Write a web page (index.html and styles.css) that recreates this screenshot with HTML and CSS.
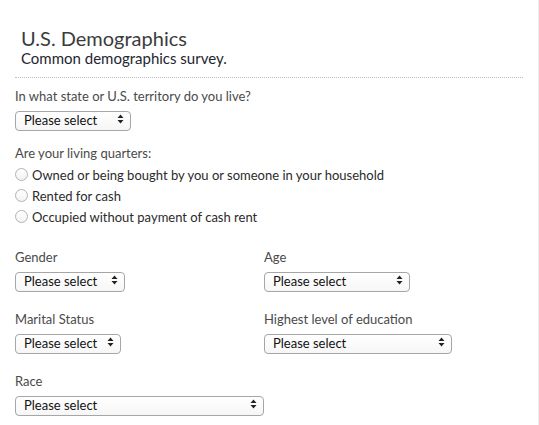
FILE: index.html
```html
<!DOCTYPE html>
<html lang="en">
<head>
<meta charset="utf-8">
<title>U.S. Demographics</title>
<link rel="stylesheet" href="styles.css">
</head>
<body>
<div class="page">
  <header class="head">
    <h1 class="title">U.S. Demographics</h1>
    <p class="subtitle">Common demographics survey.</p>
  </header>
  <hr class="rule">

  <div class="field field-state">
    <label class="label" for="state">In what state or U.S. territory do you live?</label>
    <span class="select-wrap w-state">
      <select id="state" class="select"><option>Please select</option></select>
      <svg class="arrows" width="7" height="10" viewBox="0 0 7 10"><path d="M3.5 0.5 L6.5 4 L0.5 4 Z M3.5 9.5 L6.5 6 L0.5 6 Z" fill="#222"/></svg>
    </span>
  </div>

  <div class="field field-quarters">
    <div class="label label-group">Are your living quarters:</div>
    <ul class="radios">
      <li class="radio-row"><span class="radio"></span><span class="radio-text">Owned or being bought by you or someone in your household</span></li>
      <li class="radio-row"><span class="radio"></span><span class="radio-text">Rented for cash</span></li>
      <li class="radio-row"><span class="radio"></span><span class="radio-text">Occupied without payment of cash rent</span></li>
    </ul>
  </div>

  <div class="grid">
    <div class="field">
      <label class="label" for="gender">Gender</label>
      <span class="select-wrap w-gender">
        <select id="gender" class="select"><option>Please select</option></select>
        <svg class="arrows" width="7" height="10" viewBox="0 0 7 10"><path d="M3.5 0.5 L6.5 4 L0.5 4 Z M3.5 9.5 L6.5 6 L0.5 6 Z" fill="#222"/></svg>
      </span>
    </div>
    <div class="field">
      <label class="label" for="age">Age</label>
      <span class="select-wrap w-age">
        <select id="age" class="select"><option>Please select</option></select>
        <svg class="arrows" width="7" height="10" viewBox="0 0 7 10"><path d="M3.5 0.5 L6.5 4 L0.5 4 Z M3.5 9.5 L6.5 6 L0.5 6 Z" fill="#222"/></svg>
      </span>
    </div>
    <div class="field">
      <label class="label" for="marital">Marital Status</label>
      <span class="select-wrap w-marital">
        <select id="marital" class="select"><option>Please select</option></select>
        <svg class="arrows" width="7" height="10" viewBox="0 0 7 10"><path d="M3.5 0.5 L6.5 4 L0.5 4 Z M3.5 9.5 L6.5 6 L0.5 6 Z" fill="#222"/></svg>
      </span>
    </div>
    <div class="field">
      <label class="label" for="edu">Highest level of education</label>
      <span class="select-wrap w-edu">
        <select id="edu" class="select"><option>Please select</option></select>
        <svg class="arrows" width="7" height="10" viewBox="0 0 7 10"><path d="M3.5 0.5 L6.5 4 L0.5 4 Z M3.5 9.5 L6.5 6 L0.5 6 Z" fill="#222"/></svg>
      </span>
    </div>
    <div class="field">
      <label class="label" for="race">Race</label>
      <span class="select-wrap w-race">
        <select id="race" class="select"><option>Please select</option></select>
        <svg class="arrows" width="7" height="10" viewBox="0 0 7 10"><path d="M3.5 0.5 L6.5 4 L0.5 4 Z M3.5 9.5 L6.5 6 L0.5 6 Z" fill="#222"/></svg>
      </span>
    </div>
  </div>
</div>
</body>
</html>
```

FILE: styles.css
```css
html, body {
  margin: 0;
  padding: 0;
  background: #fff;
}

body {
  font-family: Lato, "Open Sans", sans-serif;
  color: #444;
}

.page {
  box-sizing: border-box;
  width: 539px;
  min-height: 425px;
  padding: 26px 15px 0 15px;
  border-right: 1px solid #ececec;
}

.head {
  padding-left: 6px;
}

.title {
  margin: 0;
  font-size: 20px;
  line-height: 24px;
  font-weight: 400;
  color: #3b3b3b;
}

.subtitle {
  margin: 0;
  font-size: 15px;
  line-height: 16px;
  color: #1d2630;
}

.rule {
  margin: 11px 0 0 0;
  border: 0;
  border-top: 1px dotted #bdbdbd;
  height: 0;
}

.field {
  display: flex;
  flex-direction: column;
  align-items: flex-start;
}

.field-state {
  margin-top: 10px;
}

.field-quarters {
  margin-top: 16px;
}

.label {
  font-size: 13px;
  line-height: 16px;
  color: #4a4a4a;
  margin-bottom: 5px;
}

.label-group {
  margin-bottom: 3px;
}

.select-wrap {
  position: relative;
  display: inline-block;
  height: 20px;
}

.select {
  -webkit-appearance: none;
  appearance: none;
  box-sizing: border-box;
  width: 100%;
  height: 20px;
  margin: 0;
  padding: 0 20px 0 8px;
  border: 1px solid #a6a6a6;
  border-radius: 4px;
  background: linear-gradient(#ffffff, #f6f6f6);
  font-family: Lato, "Open Sans", sans-serif;
  font-size: 13px;
  line-height: 17px;
  color: #111;
}

.arrows {
  position: absolute;
  right: 7px;
  top: 5px;
  pointer-events: none;
}

.w-state { width: 116px; }
.w-gender { width: 110px; }
.w-age { width: 146px; }
.w-marital { width: 106px; }
.w-edu { width: 188px; }
.w-race { width: 249px; }

.radios {
  list-style: none;
  margin: 0;
  padding: 0;
}

.radio-row {
  display: flex;
  align-items: center;
  height: 21px;
}

.radio {
  box-sizing: border-box;
  width: 13px;
  height: 13px;
  border-radius: 50%;
  border: 1px solid #b3b3b3;
  background: linear-gradient(#ffffff, #f2f2f2);
  margin-right: 4px;
  flex: none;
}

.radio-text {
  font-size: 13px;
  line-height: 16px;
  color: #2b2b2b;
}

.grid {
  display: grid;
  grid-template-columns: 249px 249px;
  row-gap: 21px;
  margin-top: 22px;
}
```
